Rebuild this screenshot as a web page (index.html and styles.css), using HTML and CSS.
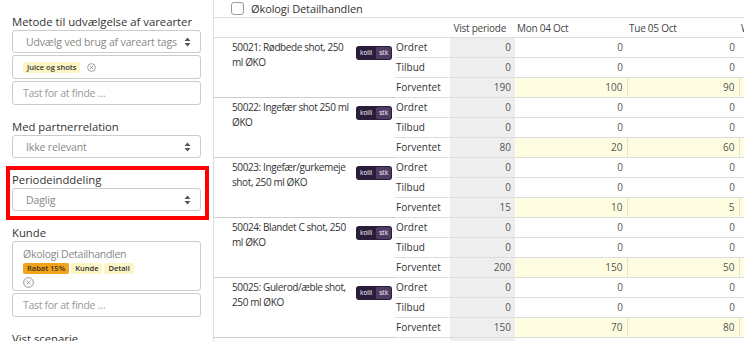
FILE: index.html
```html
<!DOCTYPE html>
<html>
<head>
  <title>Prognose</title>
  <link rel="stylesheet" href="styles.css">
</head>
<body>
<div class="page">
  <aside class="sidebar">
    <div class="field">
      <div class="field-label">Metode til udvælgelse af varearter</div>
      <div class="select"><span>Udvælg ved brug af vareart tags</span>
        <svg class="caret" width="7" height="10" viewBox="0 0 7 10"><path d="M3.5 0.5 L6.5 4 L0.5 4 Z M3.5 9.5 L6.5 6 L0.5 6 Z" fill="#555"/></svg>
      </div>
      <div class="box tag-box">
        <span class="tag">Juice og shots</span>
        <svg class="remove" width="9" height="9" viewBox="0 0 10 10"><circle cx="5" cy="5" r="4.3" fill="none" stroke="#888" stroke-width="0.9"/><path d="M3.3 3.3 L6.7 6.7 M6.7 3.3 L3.3 6.7" stroke="#888" stroke-width="0.9"/></svg>
      </div>
      <div class="box search">Tast for at finde …</div>
    </div>

    <div class="field">
      <div class="field-label">Med partnerrelation</div>
      <div class="select"><span>Ikke relevant</span>
        <svg class="caret" width="7" height="10" viewBox="0 0 7 10"><path d="M3.5 0.5 L6.5 4 L0.5 4 Z M3.5 9.5 L6.5 6 L0.5 6 Z" fill="#555"/></svg>
      </div>
    </div>

    <div class="field marked">
      <div class="field-label">Periodeinddeling</div>
      <div class="select"><span>Daglig</span>
        <svg class="caret" width="7" height="10" viewBox="0 0 7 10"><path d="M3.5 0.5 L6.5 4 L0.5 4 Z M3.5 9.5 L6.5 6 L0.5 6 Z" fill="#555"/></svg>
      </div>
    </div>

    <div class="field">
      <div class="field-label">Kunde</div>
      <div class="box customer">
        <div class="customer-name">Økologi Detailhandlen</div>
        <div class="customer-tags">
          <span class="tag tag-orange">Rabat 15%</span>
          <span class="tag">Kunde</span>
          <span class="tag">Detail</span>
        </div>
        <svg class="remove big" width="11" height="11" viewBox="0 0 10 10"><circle cx="5" cy="5" r="4.4" fill="none" stroke="#888" stroke-width="0.8"/><path d="M3.3 3.3 L6.7 6.7 M6.7 3.3 L3.3 6.7" stroke="#888" stroke-width="0.8"/></svg>
      </div>
      <div class="box search">Tast for at finde …</div>
    </div>

    <div class="field">
      <div class="field-label">Vist scenarie</div>
    </div>
  </aside>

  <main class="main">
    <div class="main-head">
      <span class="check"></span>
      <span class="main-title">Økologi Detailhandlen</span>
    </div>
    <table class="grid">
      <colgroup>
        <col class="c-name"><col class="c-unit"><col class="c-kind"><col class="c-sum"><col class="c-day"><col class="c-day"><col class="c-day">
      </colgroup>
      <thead>
        <tr><th></th><th></th><th></th><th class="sum-head">Vist periode</th><th>Mon 04 Oct</th><th>Tue 05 Oct</th><th>Wed 06 Oct</th></tr>
      </thead>
      <tbody id="rows"></tbody>
    </table>
  </main>
</div>
<script>
  var products=[
    ["50021: Rødbede shot, 250 ml ØKO",[190,100,90,0]],
    ["50022: Ingefær shot 250 ml ØKO",[80,20,60,0]],
    ["50023: Ingefær/gurkemeje shot, 250 ml ØKO",[15,10,5,0]],
    ["50024: Blandet C shot, 250 ml ØKO",[200,150,50,0]],
    ["50025: Gulerod/æble shot, 250 ml ØKO",[150,70,80,0]],
    ["50026: Æble/ingefær shot, 250 ml ØKO",[60,30,30,0]]
  ];
  var html="";
  products.forEach(function(p){
    var badge='<span class="unit"><span class="unit-a">kolli</span><span class="unit-b">stk</span></span>';
    html+='<tr><td class="name" rowspan="3">'+p[0]+'</td><td class="badge" rowspan="3">'+badge+'</td>'+
      '<td class="kind">Ordret</td><td class="sum">0</td><td class="day">0</td><td class="day">0</td><td class="day">0</td></tr>';
    html+='<tr><td class="kind">Tilbud</td><td class="sum">0</td><td class="day">0</td><td class="day">0</td><td class="day">0</td></tr>';
    var v=p[1];
    html+='<tr class="expected"><td class="kind">Forventet</td><td class="sum">'+v[0]+'</td><td class="day">'+v[1]+'</td><td class="day">'+v[2]+'</td><td class="day">'+v[3]+'</td></tr>';
  });
  document.getElementById("rows").innerHTML=html;
</script>
</body>
</html>
```

FILE: styles.css
```css
html, body {
  margin: 0;
  height: 100%;
  overflow: hidden;
  background: #fff;
  font-family: "Open Sans", Arial, sans-serif;
  color: #333;
}
.page {
  display: flex;
  height: 100%;
}

/* sidebar */
.sidebar {
  width: 189px;
  flex: none;
  padding: 14px 12px 0 12px;
  border-right: 1px solid #ddd;
}
.field {
  margin-bottom: 14px;
}
.field-label {
  font-size: 11.3px;
  line-height: 16px;
  color: #333;
  white-space: nowrap;
}
.marked {
  margin: -6px -8px 5px -6px;
  padding: 2px 4px 5px 2px;
  border: 4px solid #ff0000;
}
.select {
  height: 21px;
  border: 1px solid #ccc;
  border-radius: 3px;
  display: flex;
  align-items: center;
  justify-content: space-between;
  padding: 0 9px 0 13px;
  font-size: 10.5px;
  letter-spacing: -0.15px;
  color: #888;
  white-space: nowrap;
}
.caret {
  display: block;
}
.box {
  border: 1px solid #ccc;
  border-radius: 3px;
  margin-top: 2px;
  padding: 0 10px;
  font-size: 10.5px;
  color: #999;
}
.tag-box {
  height: 22px;
  display: flex;
  align-items: center;
  gap: 7px;
}
.search {
  height: 22px;
  line-height: 22px;
  letter-spacing: -0.3px;
}
.tag {
  display: inline-block;
  background: #fcf5c4;
  color: #333;
  font-size: 7.5px;
  font-weight: 600;
  line-height: 11px;
  letter-spacing: 0;
  padding: 0 4px;
  border-radius: 2px;
}
.tag-orange {
  background: #f2a31c;
  color: #3d2f10;
}
.remove {
  display: block;
}
.customer {
  height: 43px;
  padding-top: 5px;
  margin-top: 0;
}
.customer-name {
  font-size: 10.5px;
  letter-spacing: -0.25px;
  line-height: 15px;
  color: #888;
}
.customer-tags {
  display: flex;
  gap: 2px;
  margin-top: 1px;
}
.remove.big {
  margin-top: 3px;
}

/* main */
.main {
  flex: 1;
  overflow: hidden;
}
.main-head {
  height: 17px;
  border-bottom: 1px solid #ddd;
  display: flex;
  align-items: center;
}
.check {
  width: 11px;
  height: 11px;
  border: 1px solid #999;
  border-radius: 3px;
  margin-left: 17px;
}
.main-title {
  font-size: 11px;
  letter-spacing: -0.1px;
  margin-left: 7px;
  color: #333;
}
.grid {
  border-collapse: collapse;
  table-layout: fixed;
  width: 637px;
  font-size: 10px;
}
.c-name { width: 142px; }
.c-unit { width: 39px; }
.c-kind { width: 55px; }
.c-sum { width: 65px; }
.c-day { width: 112px; }
.grid th {
  height: 19px;
  padding: 0 2px;
  font-weight: normal;
  text-align: left;
  color: #444;
  letter-spacing: -0.25px;
  border-bottom: 1px solid #ddd;
  white-space: nowrap;
}
.grid th.sum-head {
  text-align: right;
  padding-right: 9px;
}
.grid td {
  height: 19px;
  padding: 0;
  line-height: 19px;
  border-bottom: 1px solid #ddd;
  white-space: nowrap;
}
.grid td.name {
  vertical-align: top;
  white-space: normal;
  line-height: 15px;
  letter-spacing: -0.4px;
  padding: 2px 2px 0 18px;
  color: #333;
  border-bottom-color: #ccc;
}
.grid td.badge {
  vertical-align: top;
  padding-top: 4px;
  border-bottom-color: #ccc;
}
.unit {
  display: inline-flex;
  height: 14px;
  padding: 1px;
  box-sizing: border-box;
  background: #2b1c3a;
  border-radius: 3px;
  font-size: 6.5px;
  line-height: 12px;
  color: #fff;
}
.unit-a {
  padding: 0 4px 0 3px;
}
.unit-b {
  background: #4e3b64;
  border-radius: 2px;
  padding: 0 3px;
}
.grid td.kind {
  padding-left: 1px;
  color: #333;
}
.grid td.sum {
  background: #eee;
  text-align: right;
  padding-right: 4px;
  color: #555;
}
.grid td.day {
  text-align: right;
  padding-right: 4px;
  color: #555;
}
.expected td.day {
  background: #fffde1;
  border-right: 1px solid #e5e3c6;
}
```
